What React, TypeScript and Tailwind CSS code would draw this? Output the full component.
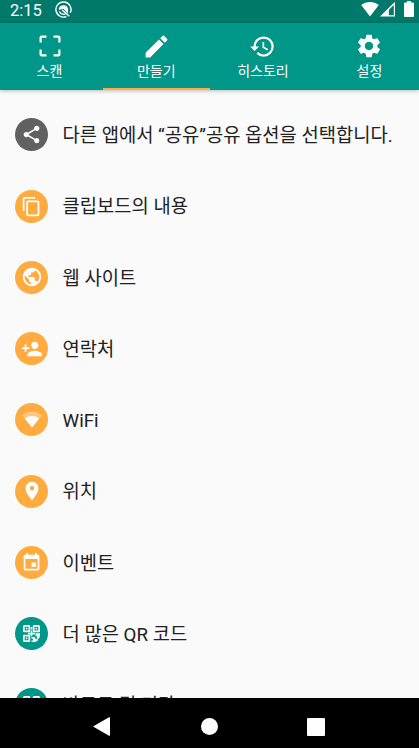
import type { ReactNode } from "react";
import {
  MdContentCopy,
  MdCreate,
  MdEvent,
  MdHistory,
  MdPersonAdd,
  MdPlace,
  MdPublic,
  MdSettings,
  MdShare,
} from "react-icons/md";

function ScanIcon() {
  return (
    <svg viewBox="0 0 22 22" className="h-[22px] w-[22px]" fill="none" stroke="currentColor" strokeWidth="2.2">
      <path d="M1.6 7.5V2.6a1 1 0 0 1 1-1H7.5M14.5 1.6h4.9a1 1 0 0 1 1 1V7.5M20.4 14.5v4.9a1 1 0 0 1-1 1H14.5M7.5 20.4H2.6a1 1 0 0 1-1-1V14.5" />
    </svg>
  );
}

function WifiIcon() {
  return (
    <svg viewBox="0 0 20 17" className="h-[17px] w-5" fill="currentColor">
      <path d="M10 16.5 0 4.3C5.8-.5 14.2-.5 20 4.3Z" opacity=".35" />
      <path d="M10 16.5 2.9 7.8C7.1 4.2 12.9 4.2 17.1 7.8Z" />
    </svg>
  );
}

function QrIcon() {
  return (
    <svg viewBox="0 0 17 17" className="h-[17px] w-[17px]" fill="currentColor">
      <path
        fillRule="evenodd"
        d="M1.5 0H6a1.2 1.2 0 0 1 1.2 1.2V6A1.2 1.2 0 0 1 6 7.2H1.2A1.2 1.2 0 0 1 0 6V1.5A1.5 1.5 0 0 1 1.5 0ZM1.7 1.7V5.5H5.5V1.7ZM11 0h4.5A1.5 1.5 0 0 1 17 1.5V6a1.2 1.2 0 0 1-1.2 1.2H11A1.2 1.2 0 0 1 9.8 6V1.2A1.2 1.2 0 0 1 11 0ZM11.5 1.7V5.5H15.3V1.7ZM1.2 9.8H6A1.2 1.2 0 0 1 7.2 11v4.8A1.2 1.2 0 0 1 6 17H1.5A1.5 1.5 0 0 1 0 15.5V11A1.2 1.2 0 0 1 1.2 9.8ZM1.7 11.5V15.3H5.5V11.5Z"
      />
      <path d="M2.8 2.8h1.6v1.6H2.8zM12.6 2.8h1.6v1.6h-1.6zM2.8 12.6h1.6v1.6H2.8zM7.7 2h1.6v2.4H7.7zM7.7 5.5h1.6v2.3h2.5v1.8H9.3v1.6H7.7V9.6H5V7.8h2.7zM12.5 8.2H17v2.4a5 5 0 0 1-2 3.6l-1.2-1V11h-1.3zM8.5 12h3.7v2h2.3l.5 1.5-3 1.5H8.5v-1.6h1.6v-1.7H8.5z" />
    </svg>
  );
}

const tabs = [
  { label: "스캔", icon: <ScanIcon /> },
  { label: "만들기", icon: <MdCreate className="size-[29px]" /> },
  { label: "히스토리", icon: <MdHistory className="size-[27px]" /> },
  { label: "설정", icon: <MdSettings className="size-[28px]" /> },
];

type Item = { label: string; color: string; icon: ReactNode };

const items: Item[] = [
  { label: "다른 앱에서 “공유”공유 옵션을 선택합니다.", color: "bg-[#616161]", icon: <MdShare className="size-[21px]" /> },
  { label: "클립보드의 내용", color: "bg-[#ffab40]", icon: <MdContentCopy className="size-[21px]" /> },
  { label: "웹 사이트", color: "bg-[#ffab40]", icon: <MdPublic className="size-[22px]" /> },
  { label: "연락처", color: "bg-[#ffab40]", icon: <MdPersonAdd className="size-[22px]" /> },
  { label: "WiFi", color: "bg-[#ffab40]", icon: <WifiIcon /> },
  { label: "위치", color: "bg-[#ffab40]", icon: <MdPlace className="size-[22px]" /> },
  { label: "이벤트", color: "bg-[#ffab40]", icon: <MdEvent className="size-[21px]" /> },
  { label: "더 많은 QR 코드", color: "bg-[#009688]", icon: <QrIcon /> },
  { label: "바코드 및 기타", color: "bg-[#009688]", icon: <QrIcon /> },
];

function StatusBar() {
  return (
    <div className="flex h-[23.4px] shrink-0 items-start bg-[#00796b] pl-[10px] pr-[5px] text-white">
      <span className="w-[45px] pt-[1px] text-[16.5px] leading-[19px]">2:15</span>
      <svg viewBox="0 0 18 18" className="mt-px h-[17px] w-[17px]" fill="none" stroke="currentColor">
        <path d="M12 16.4A8 8 0 1 1 16.2 12.4" strokeWidth="1.5" />
        <path d="M4 9.4a5 5 0 0 1 9.8-1.2v5.4L8.8 8.2Z" fill="currentColor" stroke="none" />
        <path d="M4.6 11a5 5 0 0 0 6.6 2.6" strokeWidth="1.4" />
        <path d="m7.6 9.6 7.6 6.6" strokeWidth="1.4" />
      </svg>
      <div className="ml-auto flex items-start pt-[1px]">
        <svg viewBox="0 0 18 16" className="h-4 w-[18px]" fill="currentColor">
          <path d="M9 15.4.2 4C5.2-.1 12.8-.1 17.8 4Z" />
        </svg>
        <svg viewBox="0 0 16 16" className="ml-[1px] h-4 w-4" fill="currentColor">
          <path fillRule="evenodd" d="M0 15.5 15 .8V15.5ZM9 14.3h4.8V4L9 8.8Z" />
        </svg>
        <svg viewBox="0 0 10 16" className="ml-2 h-4 w-[10px]" fill="currentColor">
          <path d="M3 0h4v1.6h2a1 1 0 0 1 1 1V15a1 1 0 0 1-1 1H1a1 1 0 0 1-1-1V2.6a1 1 0 0 1 1-1h2Z" />
        </svg>
      </div>
    </div>
  );
}

export default function App() {
  return (
    <div className="flex h-[748px] w-[419px] flex-col overflow-hidden bg-[#fafafa] font-[Roboto,'Noto_Sans_CJK_KR',sans-serif]">
      <StatusBar />

      {/* Tabs */}
      <nav className="z-10 flex h-[66.6px] shrink-0 bg-[#009688] text-white shadow-[0_1px_4px_rgba(0,0,0,0.25)]">
        {tabs.map((tab, i) => (
          <div
            key={tab.label}
            className={`flex shrink-0 flex-col items-center border-b-2 pt-2 ${
              i === 0 ? "w-[103px] pr-1" : "w-[106.6px]"
            } ${i === 1 ? "border-[#ffab40]" : "border-transparent"}`}
          >
            <div className="flex h-[30px] items-center">{tab.icon}</div>
            <span className="pt-[1px] text-sm leading-[18px]">{tab.label}</span>
          </div>
        ))}
      </nav>

      {/* List */}
      <main className="min-h-0 flex-1 overflow-hidden pt-[9.3px]">
        {items.map((item) => (
          <div key={item.label} className="flex h-[71.25px] items-center pl-[15px]">
            <div className={`flex size-[33px] shrink-0 items-center justify-center rounded-full text-white ${item.color}`}>
              {item.icon}
            </div>
            <span className="ml-[14.5px] whitespace-nowrap pt-[2.4px] text-[18.75px] text-[#212121]">{item.label}</span>
          </div>
        ))}
      </main>

      {/* Android navigation */}
      <footer className="flex h-[50px] shrink-0 items-center bg-black pt-[7px] pl-[93px]">
        <svg viewBox="0 0 17 19" className="h-[19px] w-[17px]" fill="white">
          <path d="M0 9.5 16 .3q1-.5 1 .7v17q0 1.2-1 .7Z" />
        </svg>
        <div className="ml-[91px] size-[17px] rounded-full bg-white" />
        <div className="ml-[89px] size-[18px] rounded-[1px] bg-white" />
      </footer>
    </div>
  );
}
